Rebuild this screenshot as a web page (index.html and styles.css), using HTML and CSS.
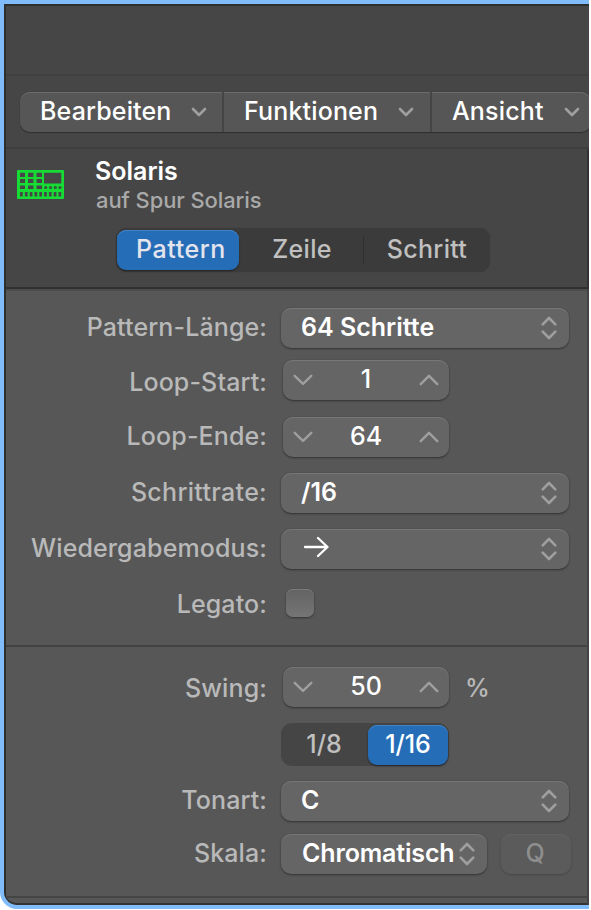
FILE: index.html
```html
<!DOCTYPE html>
<html lang="de">
<head>
<meta charset="utf-8">
<title>Solaris</title>
<link rel="stylesheet" href="styles.css">
</head>
<body>
<svg class="defs" width="0" height="0" aria-hidden="true">
  <symbol id="down" viewBox="0 0 16 10"><path d="M2 2l6 6 6-6"/></symbol>
  <symbol id="stepdown" viewBox="0 0 20 12"><path d="M1.700 1.800L10 9.800l8.300-8"/></symbol>
  <symbol id="stepup" viewBox="0 0 20 12"><path d="M1.700 10.200L10 1.800l8.300 8.400"/></symbol>
  <symbol id="updown" viewBox="0 0 16 24"><path d="M1.700 8.300L8 2l6.300 6.300M1.700 15.700L8 22l6.300-6.300"/></symbol>
</svg>
<div class="window">
  <div class="titlebar"></div>
  <nav class="menubar">
    <div class="menus">
      <div class="menu m1"><span>Bearbeiten</span><svg class="ic chev"><use href="#down"/></svg></div>
      <div class="menu m2"><span>Funktionen</span><svg class="ic chev"><use href="#down"/></svg></div>
      <div class="menu m3"><span>Ansicht</span><svg class="ic chev"><use href="#down"/></svg></div>
    </div>
  </nav>
  <header class="head">
    <div class="track">
      <svg class="synth" viewBox="0 0 47 29">
        <path class="solid" fill-rule="evenodd" d="M1 0H46Q47 0 47 1V28Q47 29 46 29H1Q0 29 0 28V1Q0 0 1 0Z
        M3 2.700V7H8V2.700ZM11 2.700V7H16.500V2.700ZM19.500 2.700V7H25V2.700ZM27 2.700V13.500H44.300V2.700Z
        M3 9V13H8V9ZM11 9V13H16.500V9ZM19.500 9V13H25V9Z
        M3 15.500V19H8V15.500ZM11 15.500V19H16.500V15.500ZM19.500 15.500V19H25V15.500Z
        M3 22V26.500H5.700V22ZM7.900 22V26.500H10.600V22ZM12.700 22V26.500H15.400V22ZM17.500 22V26.500H20.200V22ZM22.300 22V26.500H25V22ZM27.100 22V26.500H29.800V22ZM31.900 22V26.500H34.600V22ZM36.700 22V26.500H39.400V22ZM41.500 22V26.500H44.200V22Z"/>
        <g class="knob"><circle cx="28.700" cy="17.500" r="1.600"/><circle cx="33.500" cy="17.500" r="1.600"/><circle cx="38.300" cy="17.500" r="1.600"/><circle cx="43" cy="17.500" r="1.600"/></g>
      </svg>
      <div class="names"><div class="name">Solaris</div><div class="sub">auf Spur Solaris</div></div>
    </div>
    <div class="seg tabs">
      <div class="tab on"><span>Pattern</span></div>
      <div class="tab mid"><span>Zeile</span></div>
      <div class="tab last"><span>Schritt</span></div>
    </div>
  </header>
  <main class="form">
    <section class="group g1">
      <div class="row"><label>Pattern-Länge:</label><div class="select"><span>64 Schritte</span><svg class="ic ud"><use href="#updown"/></svg></div></div>
      <div class="row r2"><label>Loop-Start:</label><div class="stepper"><svg class="ic st"><use href="#stepdown"/></svg><span>1</span><svg class="ic st"><use href="#stepup"/></svg></div></div>
      <div class="row r3"><label>Loop-Ende:</label><div class="stepper"><svg class="ic st"><use href="#stepdown"/></svg><span>64</span><svg class="ic st"><use href="#stepup"/></svg></div></div>
      <div class="row r4"><label class="narrow">Schrittrate:</label><div class="select"><span>/16</span><svg class="ic ud"><use href="#updown"/></svg></div></div>
      <div class="row r5"><label>Wiedergabemodus:</label><div class="select"><svg class="arrow" viewBox="0 0 26 22"><path d="M2 11H24M15 2l9.500 9-9.500 9"/></svg><svg class="ic ud"><use href="#updown"/></svg></div></div>
      <div class="row r6"><label>Legato:</label><div class="check"></div></div>
    </section>
    <section class="group g2">
      <div class="row r7"><label>Swing:</label><div class="stepper"><svg class="ic st"><use href="#stepdown"/></svg><span>50</span><svg class="ic st"><use href="#stepup"/></svg></div><div class="pct">%</div></div>
      <div class="row r8"><div class="seg rate"><div class="tab eighth"><span>1/8</span></div><div class="tab on six"><span>1/16</span></div></div></div>
      <div class="row r9"><label>Tonart:</label><div class="select"><span>C</span><svg class="ic ud"><use href="#updown"/></svg></div></div>
      <div class="row r10"><label>Skala:</label><div class="select small"><span>Chromatisch</span><svg class="ic ud"><use href="#updown"/></svg></div><div class="q">Q</div></div>
    </section>
  </main>
</div>
</body>
</html>
```
FILE: styles.css
```css
* { box-sizing: border-box; }
html { background: #fff; }
body { display: flex; margin: 0; width: 591px; height: 910px; overflow: hidden; background: #fff; font-family: Inter, "Liberation Sans", sans-serif; font-size: 25px; line-height: 30px; color: #fff; }
.defs { position: absolute; }
.window { width: 589px; height: 909px; flex: none; border: solid #80bbfa; border-width: 4px 0 4px 4px; border-bottom-left-radius: 17px; background: #575757; overflow: hidden; box-shadow: inset 2px 2px 0 #2e2e2e, inset 0 -2px 0 #333; padding: 2px 0 0 2px; display: flex; flex-direction: column; }
span, label { white-space: nowrap; }
.ic { fill: none; stroke: #9f9f9f; stroke-width: 2.6; stroke-linecap: round; stroke-linejoin: round; flex: none; }
.titlebar { height: 70px; background: #464646; border-bottom: 2px solid #404040; flex: none; }
.menubar { height: 73px; background: #464646; border-bottom: 2px solid #3f3f3f; padding: 16px 0 0 14px; flex: none; }
.menus { display: flex; width: 571px; height: 40px; border-radius: 10px; background: #565656; box-shadow: inset 0 1px 0 #6c6c6c, 0 1px 1px #303030, 0 0 1px #393939; }
.menu { display: flex; align-items: center; justify-content: space-between; padding: 0 15px 2px 20px; font-weight: 500; letter-spacing: .15px; border-right: 2px solid #454545; }
.menu:last-child { border: 0; }
.m1 { width: 204px; }
.m2 { width: 208px; padding-left: 20px; padding-right: 16px; }
.m3 { width: 159px; padding-left: 20px; padding-right: 11px; }
.chev { width: 16px; height: 10px; position: relative; top: 1px; }
.head { height: 140px; background: #464646; border-bottom: 2px solid #303030; border-right: 2px solid #333; flex: none; }
.track { display: flex; height: 79px; padding: 7px 0 0 11px; }
.synth { width: 47px; height: 29px; margin-top: 14px; flex: none; }
.solid { fill: #17dc35; }
.knob { fill: #35583a; }
.names { margin-left: 31px; }
.name { font-weight: 600; height: 30px; }
.sub { color: #a9a9a9; font-size: 22px; height: 28px; line-height: 28px; font-weight: 450; letter-spacing: -.1px; padding-left: 1px; }
.seg { display: flex; background: #3b3b3b; border-radius: 11px; }
.tabs { width: 374px; height: 44px; margin-left: 110px; padding: 2px 0; box-shadow: 0 0 1px #383838; }
.tab { height: 40px; display: flex; align-items: center; justify-content: center; color: #c0c0c0; padding-bottom: 2px; font-weight: 450; letter-spacing: .3px; }
.on { background: #266db8; border-radius: 9px; color: #e4e4ec; box-shadow: inset 0 1px 0 #4384c4, 0 1px 2px #222; }
.tabs .on { width: 122px; margin-left: 1px; padding-left: 6px; letter-spacing: .55px; }
.mid { width: 125px; padding-left: 2px; border-right: 1px solid #303030; height: 28px; margin-top: 6px; padding-bottom: 2px; }
.last { flex: 1; }
.form { flex: 1; display: flex; flex-direction: column; border-right: 2px solid #434343; }
.g1 { height: 358px; padding-top: 17px; border-top: 2px solid #4c4c4c; border-bottom: 2px solid #424242; flex: none; }
.g2 { height: 251px; padding-top: 20px; border-bottom: 2px solid #454545; flex: none; }
.row { display: flex; height: 40px; }
label { width: 261px; text-align: right; color: #b9b9b9; padding-top: 4px; font-weight: 450; letter-spacing: .12px; }
.narrow { letter-spacing: .3px; }
.select, .stepper, .q { height: 40px; border-radius: 10px; background: #656565; box-shadow: inset 0 1px 0 #777, 0 1px 2px #333, 0 0 1px #444; display: flex; align-items: center; flex: none; }
.select { width: 288px; margin-left: 14px; padding: 0 12px 2px 20px; justify-content: space-between; font-weight: 600; }
.ud { width: 16px; height: 24px; position: relative; top: 1px; }
.stepper { width: 166px; margin-left: 16px; padding: 0 10px; justify-content: space-between; font-weight: 500; }
.stepper span { position: relative; top: -1px; }
.st { width: 20px; height: 12px; stroke-width: 2.4; }
.r2 { margin-top: 12px; }
.r2 label { padding-top: 7px; }
.r3 { margin-top: 17px; }
.r3 label { padding-top: 4px; }
.r4, .r5, .r6 { margin-top: 16px; }
.arrow { width: 26px; height: 22px; fill: none; stroke: #fff; stroke-width: 2.3; stroke-linecap: round; stroke-linejoin: round; margin: 0 0 2px 2px; }
.check { width: 28px; height: 28px; margin: 4px 0 0 19px; border-radius: 7px; background: linear-gradient(#636363, #757575); box-shadow: inset 0 1px 0 #7b7b7b, 0 1px 2px #333; }
.r7 label { padding-top: 6px; }
.pct { margin-left: 16px; padding-top: 6px; color: #b9b9b9; font-weight: 500; }
.r8 { margin-top: 16px; height: 43px; }
.rate { margin-left: 275px; width: 168px; height: 43px; padding: 2px 1px; background: #454545; }
.eighth { width: 84px; font-weight: 500; letter-spacing: 0; }
.six { width: 80px; color: #fff; font-weight: 500; margin-left: 2px; letter-spacing: 0; }
.r9 { margin-top: 15px; }
.r10 { margin-top: 13px; }
.small { width: 206px; padding-left: 21px; padding-right: 12px; letter-spacing: -.15px; }
.q { width: 70px; margin-left: 14px; justify-content: center; color: #8d8d8d; background: #5b5b5b; box-shadow: inset 0 1px 0 #636363, 0 1px 2px #464646; padding: 0 2px 2px 0; font-weight: 450; }
```
